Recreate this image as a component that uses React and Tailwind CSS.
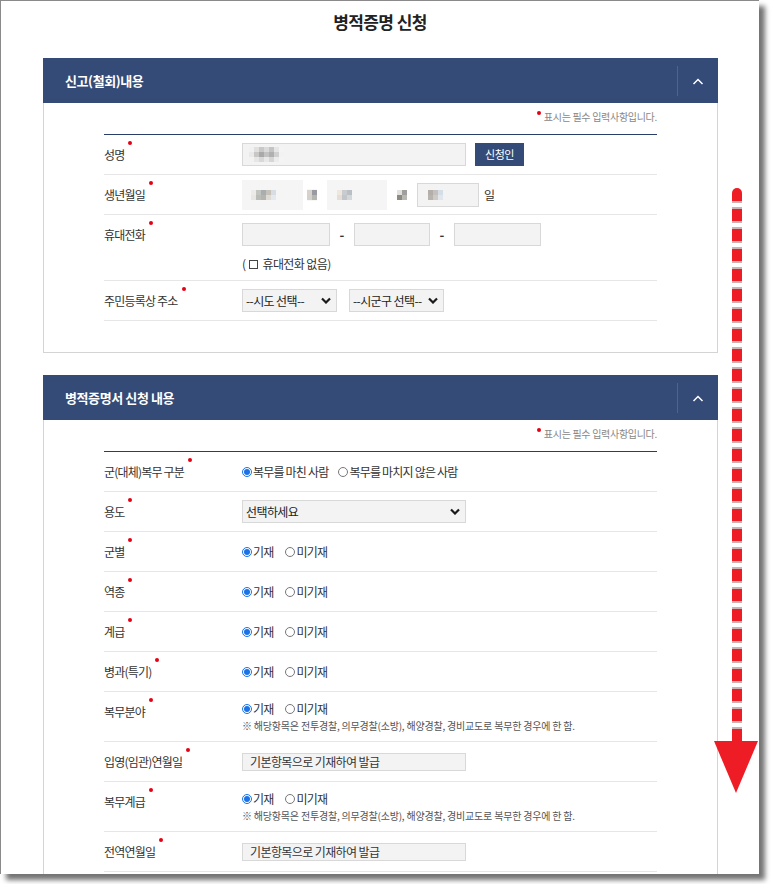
import React from "react";

const NAVY = "bg-[#344b78]";

function Dot() {
  return <span className="-mt-[2px] ml-[4px] h-[4px] w-[4px] shrink-0 self-start rounded-full bg-[#e60012]" />;
}

function Label({ children }) {
  return (
    <div className="flex w-[138px] shrink-0 items-start">
      <div className="flex h-[23px] items-center">
        <span className="text-[12px] tracking-[-0.8px] text-[#333]">{children}</span>
        <Dot />
      </div>
    </div>
  );
}

function Row({ label, children }) {
  return (
    <div className="flex border-b border-[#e6e6e6] py-[8px]">
      <Label>{label}</Label>
      <div className="flex-1">{children}</div>
    </div>
  );
}

function Chevron() {
  return (
    <svg width="10" height="7" viewBox="0 0 10 7">
      <polyline points="1,1.5 5,5.5 9,1.5" fill="none" stroke="#1a1a1a" strokeWidth="2.2" />
    </svg>
  );
}

function Select({ w, children }) {
  return (
    <div className={`flex h-[23px] items-center justify-between border border-[#d8d8d8] bg-[#f3f3f3] pl-[3px] pr-[5px] text-[12px] tracking-[-0.6px] text-[#222] ${w}`}>
      <span>{children}</span>
      <Chevron />
    </div>
  );
}

function Input({ w, children }) {
  return (
    <div className={`flex h-[23px] items-center border border-[#d8d8d8] bg-[#f3f3f3] ${w}`}>{children}</div>
  );
}

function Radio({ checked }) {
  return checked ? (
    <span className="flex h-[10px] w-[10px] shrink-0 items-center justify-center rounded-full border border-[#1a73e8] bg-white">
      <span className="h-[6px] w-[6px] rounded-full bg-[#1a73e8]" />
    </span>
  ) : (
    <span className="h-[10px] w-[10px] shrink-0 rounded-full border border-[#777] bg-white" />
  );
}

function Radios({ options = ["기재", "미기재"], gap = "mr-[12px]" }) {
  return (
    <div className="flex h-[23px] items-center text-[12px] tracking-[-0.8px] text-[#333]">
      {options.map((o, i) => (
        <span key={o} className={`flex items-center ${gap}`}>
          <Radio checked={i === 0} />
          <span className="ml-[1px]">{o}</span>
        </span>
      ))}
    </div>
  );
}

function Note() {
  return (
    <p className="mt-[1px] text-[10px] leading-[14px] tracking-[-0.2px] text-[#555]">
      ※ 해당항목은 전투경찰, 의무경찰(소방), 해양경찰, 경비교도로 복무한 경우에 한 함.
    </p>
  );
}

// pixelated blur over personal data
function Mosaic({ rows }) {
  return (
    <div className="flex flex-col blur-[0.4px]">
      {rows.map((r, i) => (
        <div key={i} className="flex">
          {r.map((c, j) => (
            <span key={j} className="h-[5px] w-[5px]" style={{ background: c }} />
          ))}
        </div>
      ))}
    </div>
  );
}

function Panel({ title, children }) {
  return (
    <section className="ml-[42px] w-[675px]">
      <div className={`flex h-[45px] items-center ${NAVY}`}>
        <h2 className="flex-1 pl-[22px] text-[13px] font-bold tracking-[-0.4px] text-white">{title}</h2>
        <div className="flex h-[30px] w-[41px] items-center justify-center border-l border-[#4e6392]">
          <svg width="12" height="8" viewBox="0 0 12 8">
            <polyline points="1.5,7 6,2.5 10.5,7" fill="none" stroke="#fff" strokeWidth="1.5" />
          </svg>
        </div>
      </div>
      <div className="border-x border-b border-[#d4d4d4] px-[60px] pt-[7px]">
        <p className="flex justify-end text-[10px] leading-[14px] tracking-[-0.3px] text-[#888]">
          <span className="mr-[3px] mt-[1px] h-[4px] w-[4px] rounded-full bg-[#e60012]" />
          표시는 필수 입력사항입니다.
        </p>
        <div className="mt-[10px] border-t border-[#2a3d68]">{children}</div>
      </div>
    </section>
  );
}

function Arrow() {
  const dashes = [];
  for (let k = 1; k < 28; k++) {
    const y = 189 + k * 20;
    dashes.push(
      <g key={k}>
        <rect x="732" y={y - 2} width="10" height="2" fill="#c9b3b3" />
        <rect x="732" y={y} width="10" height="12" fill="#ee1c25" />
        <rect x="732" y={y + 12} width="10" height="2" fill="#c9b3b3" />
      </g>
    );
  }
  return (
    <svg
      className="absolute left-[713px] top-[184px]"
      width="46"
      height="612"
      viewBox="714 185 46 612"
    >
      <path d="M732,201 V193 A5,5 0 0 1 742,193 V201 Z" fill="#ee1c25" />
      <rect x="732" y="201" width="10" height="2" fill="#c9b3b3" />
      {dashes}
      <polygon points="714,741 758,741 736,793" fill="#ee1c25" />
    </svg>
  );
}

const nameRows = [
  ["#f1f1f1", "#e2e0df", "#c8c8c8", "#dadada", "#c4c4c4", "#e6e6e6", "#f4f4f4"],
  ["#ebe9e8", "#c9c7c6", "#a9a9a9", "#c2c2c2", "#b0b0b0", "#d0d0d0", "#f2f2f2"],
  ["#f2f2f2", "#e6e6e6", "#d8d8d8", "#e8e8e8", "#d6d6d6", "#ececec", "#f4f4f4"],
];
const g1 = [
  ["#ecebea", "#c2c4c0", "#a8adb1", "#c6c2ba", "#d8dde3"],
  ["#e8e7e4", "#b9bcb8", "#b7b3ad", "#dedbd4", "#e5e8ec"],
];
const g2 = [
  ["#d7d2cc", "#9a9aa2"],
  ["#d4d0ca", "#b6b5b0"],
];
const g3 = [
  ["#efe6dc", "#c8ccd0", "#b9bfc4"],
  ["#e4ded7", "#c2c6c8", "#d2d7da"],
];
const g4 = [
  ["#e2e1df", "#9f9f9c"],
  ["#8f8a80", "#b8b8b4"],
];
const g5 = [
  ["#b4aeaa", "#c3c0bd", "#d5dde6"],
  ["#b9b3ae", "#cfcac6", "#e1e6ec"],
];

export default function App() {
  return (
    <div className="h-[884px] w-[771px] overflow-hidden bg-white font-['Noto_Sans_CJK_KR',sans-serif]">
      <div className="relative h-[874px] w-[759px] overflow-hidden border-l border-t border-[#8a8a8a] bg-white shadow-[6px_6px_5px_rgba(0,0,0,0.55)]">
        <h1 className="pt-[9px] text-center text-[17px] font-bold leading-[24px] tracking-[-0.6px] text-[#222]">
          병적증명 신청
        </h1>

        <div className="mt-[24px]">
          <Panel title="신고(철회)내용">
            <Row label="성명">
              <div className="flex items-center">
                <Input w="w-[224px]">
                  <div className="ml-[6px]">
                    <Mosaic rows={nameRows} />
                  </div>
                </Input>
                <button className={`ml-[9px] h-[23px] w-[49px] ${NAVY} text-[11px] tracking-[-0.5px] text-white`}>
                  신청인
                </button>
              </div>
            </Row>
            <Row label="생년월일">
              <div className="flex h-[23px] items-center text-[12px] text-[#333]">
                <div className="flex h-[30px] w-[61px] items-center bg-[#f5f5f5] pl-[9px] blur-[0.3px]">
                  <Mosaic rows={g1} />
                </div>
                <div className="ml-[4px] flex h-[12px] w-[10px] items-center bg-[#f7f7f7]">
                  <Mosaic rows={g2} />
                </div>
                <div className="ml-[10px] flex h-[30px] w-[60px] items-center bg-[#f5f5f5] pl-[10px]">
                  <Mosaic rows={g3} />
                </div>
                <div className="ml-[10px] flex h-[12px] w-[10px] items-center">
                  <Mosaic rows={g4} />
                </div>
                <div className="ml-[10px] flex h-[24px] w-[62px] items-center border border-[#d8d8d8] bg-[#f3f3f3] pl-[10px]">
                  <Mosaic rows={g5} />
                </div>
                <span className="ml-[5px]">일</span>
              </div>
            </Row>
            <Row label="휴대전화">
              <div className="flex items-center">
                <Input w="w-[88px]" />
                <span className="w-[24px] text-center text-[13px] font-bold text-[#333]">-</span>
                <Input w="w-[76px]" />
                <span className="w-[24px] text-center text-[13px] font-bold text-[#333]">-</span>
                <Input w="w-[87px]" />
              </div>
              <p className="mt-[10px] flex items-center text-[12px] leading-[16px] tracking-[-0.6px] text-[#333]">
                (<span className="ml-[4px] mr-[4px] h-[9px] w-[9px] border border-[#444]" />휴대전화 없음)
              </p>
            </Row>
            <Row label="주민등록상 주소">
              <div className="flex items-center gap-[12px]">
                <Select w="w-[95px]">--시도 선택--</Select>
                <Select w="w-[95px]">--시군구 선택--</Select>
              </div>
            </Row>
            <div className="h-[31px]" />
          </Panel>
        </div>

        <div className="mt-[22px]">
          <Panel title="병적증명서 신청 내용">
            <Row label="군(대체)복무 구분">
              <Radios options={["복무를 마친 사람", "복무를 마치지 않은 사람"]} gap="mr-[10px]" />
            </Row>
            <Row label="용도">
              <Select w="w-[224px]">선택하세요</Select>
            </Row>
            <Row label="군별">
              <Radios />
            </Row>
            <Row label="역종">
              <Radios />
            </Row>
            <Row label="계급">
              <Radios />
            </Row>
            <Row label="병과(특기)">
              <Radios />
            </Row>
            <Row label="복무분야">
              <div className="flex h-[18px] items-center">
                <Radios />
              </div>
              <Note />
            </Row>
            <Row label="입영(임관)연월일">
              <div className="flex h-[23px] items-center">
                <div className="flex h-[18px] w-[224px] items-center border border-[#d8d8d8] bg-[#f3f3f3] pl-[7px] text-[12px] tracking-[-0.6px] text-[#333]">
                  기본항목으로 기재하여 발급
                </div>
              </div>
            </Row>
            <Row label="복무계급">
              <div className="flex h-[18px] items-center">
                <Radios />
              </div>
              <Note />
            </Row>
            <Row label="전역연월일">
              <div className="flex h-[23px] items-center">
                <div className="flex h-[18px] w-[224px] items-center border border-[#d8d8d8] bg-[#f3f3f3] pl-[7px] text-[12px] tracking-[-0.6px] text-[#333]">
                  기본항목으로 기재하여 발급
                </div>
              </div>
            </Row>
            <div className="h-[40px]" />
          </Panel>
        </div>

        <Arrow />
      </div>
    </div>
  );
}
